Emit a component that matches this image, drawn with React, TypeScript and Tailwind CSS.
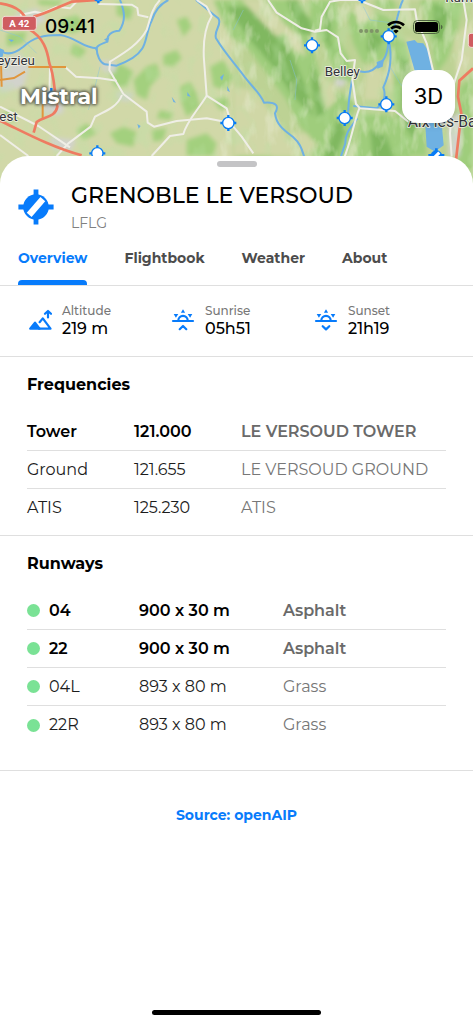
import React from 'react';
import clsx from 'clsx';

interface Frequency {
  name: string;
  value: string;
  callsign: string;
  primary?: boolean;
}

interface Runway {
  name: string;
  size: string;
  surface: string;
  primary?: boolean;
}

interface StatProps {
  label: string;
  value: string;
  icon: React.ReactNode;
}

const tabs = ['Overview', 'Flightbook', 'Weather', 'About'];

const frequencies: Frequency[] = [
  { name: 'Tower', value: '121.000', callsign: 'LE VERSOUD TOWER', primary: true },
  { name: 'Ground', value: '121.655', callsign: 'LE VERSOUD GROUND' },
  { name: 'ATIS', value: '125.230', callsign: 'ATIS' },
];

const runways: Runway[] = [
  { name: '04', size: '900 x 30 m', surface: 'Asphalt', primary: true },
  { name: '22', size: '900 x 30 m', surface: 'Asphalt', primary: true },
  { name: '04L', size: '893 x 80 m', surface: 'Grass' },
  { name: '22R', size: '893 x 80 m', surface: 'Grass' },
];

// Airfields shown on the map, in map units
const airfields = [
  [936, 136], [1166, 109], [1159, 313], [1034, 354], [685, 369], [292, 460], [295, -14], [1086, -14],
];

const forests = [
  'M330 225 L360 190 L400 215 L380 260 L345 260 Z',
  'M400 240 L440 200 L470 190 L480 225 L450 260 L440 300 L410 285 Z',
  'M490 165 L530 150 L545 175 L520 200 L490 195 Z',
  'M540 260 L570 245 L590 280 L600 320 L560 350 L545 310 Z',
  'M330 400 L370 380 L410 395 L400 440 L350 430 Z',
  'M560 420 L620 400 L650 430 L640 468 L560 468 Z',
  'M110 0 L190 0 L170 18 L120 15 Z',
  'M180 60 L230 45 L260 80 L220 100 L180 90 Z',
  'M20 100 L80 95 L70 130 L20 140 Z',
  'M350 5 L400 25 L390 60 L350 45 Z',
  'M530 60 L560 50 L575 80 L550 110 Z',
  'M230 390 L260 370 L290 400 L250 420 Z',
  'M10 340 L40 330 L50 360 L20 365 Z',
  'M480 330 L520 340 L510 360 L470 355 Z',
  'M630 200 L670 180 L700 230 L680 270 L640 260 Z',
  'M220 130 L260 150 L240 175 L210 160 Z',
  'M455 390 L500 385 L490 420 L460 425 Z',
  'M640 300 L680 290 L690 320 L660 330 Z',
];

const hills = [
  'M640 0 L860 0 L900 60 L930 120 L960 220 L990 330 L1000 400 L960 440 L900 380 L860 300 L800 220 L740 140 L690 110 Z',
  'M930 0 L1010 0 L1020 60 L1010 110 L1050 180 L1060 250 L1010 240 L990 180 L960 110 L930 80 Z',
  'M1040 40 L1120 30 L1180 60 L1190 130 L1150 180 L1090 190 L1060 130 Z',
  'M1180 110 L1230 130 L1260 230 L1270 350 L1280 468 L1180 468 L1190 330 L1170 240 Z',
  'M1260 0 L1390 0 L1370 100 L1340 180 L1310 220 L1290 110 Z',
  'M1080 340 L1170 345 L1220 400 L1240 564 L1060 564 L1070 430 Z',
  'M1000 270 L1060 300 L1060 420 L1010 564 L900 564 L960 420 Z',
  'M720 400 L800 440 L860 564 L700 564 Z',
  'M1380 260 L1419 230 L1419 564 L1370 564 Z',
  'M1120 0 L1180 0 L1190 30 L1140 25 Z',
];

const ridges = [
  'M680 20 L760 20 L830 90 L880 170 L920 270 L940 350 L880 290 L820 200 L750 120 Z',
  'M860 0 L890 0 L930 60 L940 105 L900 100 Z',
  'M975 20 L995 60 L990 120 L1010 170 L975 120 Z',
  'M1110 90 L1150 110 L1130 160 L1100 150 Z',
  'M1200 160 L1225 190 L1240 280 L1245 420 L1215 380 L1210 260 Z',
  'M1300 10 L1350 30 L1330 120 L1305 120 Z',
  'M1110 390 L1160 410 L1190 500 L1120 490 Z',
  'M1020 340 L1035 400 L985 520 L970 480 Z',
  'M935 190 L960 250 L975 340 L950 350 L935 260 Z',
];

const fields = [
  'M725 0 L795 0 L830 40 L870 100 L830 110 L780 60 Z',
  'M960 230 L1000 250 L1010 300 L980 330 L965 290 Z',
  'M1060 10 L1110 10 L1130 50 L1075 70 Z',
  'M1100 200 L1150 210 L1140 300 L1090 300 Z',
  'M1215 110 L1240 120 L1290 260 L1280 320 L1240 220 Z',
  'M840 60 L900 110 L920 170 L880 150 Z',
  'M1360 110 L1419 60 L1419 200 L1370 250 Z',
  'M870 400 L920 400 L950 440 L910 468 Z',
  'M1160 180 L1180 200 L1180 280 L1162 270 Z',
  'M700 260 L760 270 L830 360 L900 468 L700 468 Z',
];

const rivers = [
  'M0 150 C20 168 45 160 70 140 C100 112 130 105 180 105 C230 112 245 142 290 145 C290 165 300 188 315 193 L350 197 C390 182 415 165 425 148 C440 130 440 90 455 62 C465 30 480 12 505 0',
  'M360 0 C372 30 380 60 358 92 C335 92 318 108 322 125 C295 135 285 142 290 150',
  'M588 0 C610 18 640 45 655 55 C668 75 640 90 648 115 C675 160 700 185 735 232 C765 270 780 280 792 308 C830 305 838 318 825 340 C830 380 860 395 880 412 C905 435 905 450 916 480',
  'M1209 0 C1190 35 1200 60 1166 110 C1165 160 1155 180 1139 190 C1120 215 1100 220 1079 214',
  'M1166 120 C1180 180 1165 230 1150 262 C1160 290 1150 310 1130 325 L1060 318',
  'M1056 240 C1050 280 1045 300 1044 345',
  'M1072 355 C1050 385 1035 400 1036 430 C1030 450 1025 460 1020 480',
];

const roads = [
  'M60 45 L105 35 L125 40 L170 20 L210 25 L235 0',
  'M295 12 L395 14 L412 24 L415 45 L445 52',
  'M480 0 C455 25 450 60 440 90 C415 135 370 160 330 185 L328 210 L370 282 L440 335 L443 368 L462 380 L530 363 L620 355 L690 368 L725 410 L760 460',
  'M198 203 L228 230 L300 235 L350 242',
  'M366 285 C350 325 310 335 285 350 L272 380 L205 430 L170 468',
  'M590 0 L620 20 L635 48 C610 90 610 150 612 180 L620 287 L680 325 L690 360',
  'M620 287 C590 335 560 365 550 402 L510 408 L455 468',
  'M0 320 L115 378 L210 442',
  'M0 405 L85 468',
  'M150 200 L148 300',
  'M804 0 L830 38 L905 85 L945 95 L980 90 L1014 112 L1022 160 L1040 183 L1065 180 L1057 240 L1068 312 L1080 325 L1185 333 L1225 365',
  'M945 92 L960 88 L965 50 L990 5 L1020 0 L1075 0 L1150 30 L1245 28 L1250 60 L1280 130 L1300 215',
  'M1390 0 L1400 60 L1385 180 L1362 250 L1350 400 L1355 470',
  'M1078 325 C1060 370 1055 420 1030 480',
];

const AirfieldMap: React.FC = () => (
  <svg
    viewBox="0 0 1419 564"
    preserveAspectRatio="xMidYMin slice"
    className="absolute inset-0 h-full w-full"
    aria-hidden="true"
  >
    <defs>
      <filter id="relief" x="-5%" y="-5%" width="110%" height="110%">
        <feGaussianBlur stdDeviation="7" />
      </filter>
      <filter id="woods" x="0" y="0" width="100%" height="100%">
        <feTurbulence type="fractalNoise" baseFrequency="0.022 0.016" numOctaves="2" seed="8" />
        <feColorMatrix values="0 0 0 0 0.5  0 0 0 0 0.76  0 0 0 0 0.38  4 0 0 0 -2" />
      </filter>
      <filter id="clearings" x="0" y="0" width="100%" height="100%">
        <feTurbulence type="fractalNoise" baseFrequency="0.03 0.012" numOctaves="3" seed="21" />
        <feColorMatrix values="0 0 0 0 0.82  0 0 0 0 0.85  0 0 0 0 0.66  4 0 0 0 -2" />
      </filter>
    </defs>
    <rect width="1419" height="564" fill="#d1d8a8" />
    <rect x="700" width="719" height="564" fill="#bdd294" filter="url(#relief)" />

    {/* Terrain */}
    <g filter="url(#relief)">
      {hills.map((d) => <path key={d} d={d} fill="#9fcd7c" />)}
      {ridges.map((d) => <path key={d} d={d} fill="#80b861" />)}
      {forests.map((d) => <path key={d} d={d} fill="#a3d07e" />)}
      {fields.map((d) => <path key={d} d={d} fill="#d0d7a6" />)}
      <path d="M45 40 L110 25 L140 60 L100 80 L60 70 Z M0 180 L60 160 L90 190 L70 260 L0 280 Z M120 270 L190 270 L190 340 L130 350 Z M300 180 L350 185 L345 220 L310 215 Z M350 275 L400 280 L390 305 L355 300 Z M150 410 L230 420 L210 455 L160 450 Z M1005 235 L1040 240 L1030 262 L1005 258 Z M1345 350 L1385 340 L1380 468 L1345 468 Z" fill="#d2d3cc" />
    </g>
    <rect width="1419" height="564" filter="url(#woods)" opacity="0.3" />
    <rect x="660" width="759" height="564" filter="url(#clearings)" opacity="0.4" />

    {/* Water */}
    <g fill="none" stroke="#6fb1e2" strokeWidth="6" strokeLinejoin="round">
      {rivers.map((d) => <path key={d} d={d} />)}
    </g>
    <g fill="none" stroke="#86c2dc" strokeWidth="2" opacity="0.7">
      <path d="M300 200 L280 280 L265 330 M0 90 L60 110 L110 160 M1185 70 L1110 60 L1090 20 M1170 200 L1200 250 L1240 300 M730 30 L700 90 M870 180 L890 240 L885 300" />
    </g>
    <g fill="#6fb1e2">
      <path d="M1219 125 L1244 120 L1252 128 L1270 130 L1283 150 L1300 212 L1325 370 L1331 436 L1305 455 L1280 440 L1275 360 L1245 215 Z" />
      <path d="M1130 186 L1152 178 L1148 200 L1132 206 Z M515 290 L528 308 L520 306 Z M562 276 L572 290 L562 288 Z M660 232 L672 222 L666 242 Z M682 258 L690 276 L682 272 Z M412 372 L422 378 L416 386 Z M25 118 L42 120 L34 126 Z M0 145 L12 150 L8 170 L0 172 Z M312 118 L328 112 L324 128 Z" />
    </g>

    {/* Roads */}
    <g fill="none" stroke="#efeee6" strokeWidth="6" strokeLinejoin="round">
      {roads.map((d) => <path key={d} d={d} />)}
    </g>
    <g fill="none" stroke="#e0963c" strokeWidth="6">
      <path d="M85 201 L198 201 M0 240 L42 234 L75 215 M3 190 L5 260 M128 310 L128 355" />
    </g>
    <g fill="none" stroke="#ee7b61" strokeWidth="8">
      <path d="M0 10 C55 18 78 40 88 88 C130 112 142 150 148 190 C165 230 162 280 172 320 C165 355 130 348 110 366 L101 398" />
      <path d="M0 362 C70 395 150 440 245 466" />
      <path d="M100 50 C140 40 180 18 215 5 L295 0" />
      <path d="M1419 205 L1378 242 L1374 290 L1384 340 L1368 480" />
    </g>

    {/* Road shields */}
    <rect x="7" y="49" width="102" height="42" rx="8" fill="#cf5c60" stroke="#f3ddd6" strokeWidth="3" />
    <text x="58" y="81" textAnchor="middle" className="fill-white font-['Roboto',sans-serif] text-[29px] font-bold">A 42</text>
    <rect x="1405" y="100" width="60" height="42" rx="8" fill="#cf5c60" stroke="#f3ddd6" strokeWidth="3" />

    {/* Airfields */}
    <g stroke="#077bf5">
      {airfields.map(([x, y]) => (
        <g key={`${x}-${y}`}>
          <path d={`M${x - 24} ${y}h48M${x} ${y - 24}v48`} strokeWidth="7" />
          <circle cx={x} cy={y} r="17" fill="#fff" strokeWidth="4" />
        </g>
      ))}
      <path d="M128 290h48M154 264v48" strokeWidth="7" />
      <circle cx="154" cy="290" r="17" fill="#0a5cb8" />
      <path d="M1285 466h48M1309 445v48" strokeWidth="8" />
      <circle cx="1309" cy="468" r="17" fill="#077bf5" />
      <path d="M1300 476l18 -18" stroke="#fff" strokeWidth="9" />
    </g>

    {/* Place names */}
    <g
      className="fill-[#30333a] font-['Roboto',sans-serif] text-[40px]"
      stroke="#f1f1e4"
      strokeWidth="5"
      strokeLinejoin="round"
      paintOrder="stroke"
    >
      <text x="-8" y="195">eyzieu</text>
      <text x="-2" y="362">est</text>
      <text x="974" y="228">Belley</text>
      <text x="1223" y="381" className="text-[47px]">Aix-les-Bains</text>
      <text x="1336" y="6">Rumilly</text>
    </g>
  </svg>
);

const StatusBar: React.FC = () => (
  <div className="relative flex h-[54px] items-center justify-between pr-[30px] pl-[45px] text-black">
    <span className="font-['Inter',sans-serif] text-[19px] font-medium">09:41</span>
    <div className="flex items-center gap-2">
      <svg width="20" height="4" viewBox="0 0 20 4" className="mt-2 fill-[#7f9468]" aria-hidden="true">
        <circle cx="2" cy="2" r="2" />
        <circle cx="7.3" cy="2" r="2" />
        <circle cx="12.6" cy="2" r="2" />
        <circle cx="18" cy="2" r="2" />
      </svg>
      <svg width="18" height="14" viewBox="0 0 18 14" fill="none" stroke="#000" strokeWidth="2.6" aria-hidden="true">
        <path d="M1 5.2a11.5 11.5 0 0 1 16 0" />
        <path d="M4.1 8.6a7 7 0 0 1 9.8 0" />
        <path d="M9 13.6L6.3 11a3.9 3.9 0 0 1 5.4 0z" fill="#000" stroke="none" />
      </svg>
      <svg width="30" height="14" viewBox="0 0 30 14" aria-hidden="true">
        <rect x="0.5" y="0.5" width="26" height="13" rx="4" fill="none" stroke="#4e6440" />
        <rect x="2" y="2" width="23" height="10" rx="2.6" />
        <path d="M27.9 4.7v4.6c1.1-.4 1.6-1.3 1.6-2.3s-.5-1.9-1.6-2.3z" fill="#4e6440" />
      </svg>
    </div>
  </div>
);

const AirfieldIcon: React.FC = () => (
  <svg width="36" height="36" viewBox="0 0 36 36" className="shrink-0 fill-[#077bfb]" aria-hidden="true">
    <path d="M15.6 0.4h4.8v35.2h-4.8z" />
    <path d="M0.4 15.6h35.2v4.8H0.4z" />
    <circle cx="18" cy="18" r="12.8" />
    <rect x="14.8" y="7.6" width="6.4" height="20.8" fill="#fff" transform="rotate(41 18 18)" />
  </svg>
);

const AltitudeIcon: React.FC = () => (
  <svg width="24" height="24" viewBox="0 0 24 24" fill="none" stroke="#077bfb" strokeWidth="2.2" strokeLinecap="round" strokeLinejoin="round" aria-hidden="true">
    <path d="M2.2 20.7L7 14.6l4.6 6.1z" fill="#077bfb" />
    <path d="M11 20.700H22.500L14.800 10.400l-3.200 3.800" />
    <path d="M20 9.500V3.200M17 5.800L20 3l3 2.800" />
  </svg>
);

const SunIcon: React.FC<{ rising?: boolean }> = ({ rising = false }) => (
  <svg width="24" height="24" viewBox="0 0 24 24" fill="none" stroke="#077bfb" strokeWidth="2.2" strokeLinecap="round" strokeLinejoin="round" aria-hidden="true">
    <path d="M2 13h20" />
    <path d="M7.3 12.6a4.7 4.7 0 0 1 9.4 0" />
    <path d="M12 1.2l2.1 3.5H9.9zM2.7 6h4.6L4.900 9.700zM21.300 6h-4.600l2.400 3.700z" fill="#077bfb" stroke="none" />
    {rising ? <path d="M8.700 21.200L12 18l3.300 3.200" /> : <path d="M8.700 18.200l3.300 3.200 3.300-3.200" />}
  </svg>
);

const Stat: React.FC<StatProps> = ({ label, value, icon }) => (
  <div className="flex items-center gap-2.5">
    {icon}
    <dl>
      <dt className="text-xs leading-[18px] font-medium text-[#777777]">{label}</dt>
      <dd className="text-base leading-[18px] font-medium text-black">{value}</dd>
    </dl>
  </div>
);

const Section: React.FC<{ title: string; className: string; children: React.ReactNode }> = ({
  title,
  className,
  children,
}) => (
  <section className={clsx('border-b border-[#dfdfdf] px-[27px] pt-4', className)}>
    <h2 className="text-base leading-6 font-bold text-black">{title}</h2>
    <table className="mt-4 w-full table-fixed border-separate border-spacing-0 text-left whitespace-nowrap">
      {children}
    </table>
  </section>
);

const App: React.FC = () => {
  return (
    <div className="flex min-h-screen flex-col bg-white font-['Montserrat','Inter',sans-serif]">
      <header className="relative h-[188px] overflow-hidden">
        <AirfieldMap />
        <StatusBar />
        <div className="relative mt-4 flex items-center justify-between pr-[18px] pl-5">
          <span className="text-[22px] font-bold text-white [text-shadow:0_0_2px_#6b6d5c,0_0_3px_#6b6d5c,0_0_3px_#6b6d5c,0_0_4px_#6b6d5c,0_0_4px_#6b6d5c]">
            Mistral
          </span>
          <button type="button" className="size-[53px] rounded-2xl bg-white font-['Inter',sans-serif] text-[22px] text-black shadow-md">
            3D
          </button>
        </div>
      </header>

      <main className="relative -mt-8 flex flex-1 flex-col rounded-t-[28px] bg-white pt-[5px]">
        <div className="mx-auto h-1.5 w-10 rounded-full bg-[#c4c4c6]"></div>

        {/* Title */}
        <div className="flex items-center gap-[17px] px-[18px] pt-[13px]">
          <AirfieldIcon />
          <div>
            <h1 className="text-[22px] leading-8 font-medium text-black">GRENOBLE LE VERSOUD</h1>
            <p className="text-sm leading-[22px] text-[#808080]">LFLG</p>
          </div>
        </div>

        {/* Tabs */}
        <nav className="flex gap-[37px] border-b border-[#dfdfdf] px-[18px]">
          {tabs.map((tab, index) => (
            <button
              key={tab}
              type="button"
              className={clsx('flex flex-col pt-3 text-sm leading-6 font-bold', index === 0 ? 'text-[#077bfb]' : 'text-[#4c4c4c]')}
            >
              {tab}
              <span className={clsx('mt-2.5 h-[5px] w-full rounded-t-[4px]', index === 0 && 'bg-[#077bfb]')}></span>
            </button>
          ))}
        </nav>

        {/* Quick facts */}
        <div className="grid h-[71px] grid-cols-3 border-b border-[#dfdfdf] pr-4 pb-0.5 pl-7">
          <Stat label="Altitude" value="219 m" icon={<AltitudeIcon />} />
          <Stat label="Sunrise" value="05h51" icon={<SunIcon rising />} />
          <Stat label="Sunset" value="21h19" icon={<SunIcon />} />
        </div>

        <Section title="Frequencies" className="pb-2">
          <colgroup>
            <col className="w-[107px]" />
            <col className="w-[107px]" />
            <col />
          </colgroup>
          <tbody className="[&>tr:not(:last-child)>*]:border-b [&>tr>*]:border-[#dfdfdf]">
            {frequencies.map((frequency) => (
              <tr key={frequency.name} className={clsx('h-[38px] text-base', frequency.primary ? 'font-semibold text-black' : 'text-[#1c1c1c]')}>
                <th scope="row" className={clsx('p-0', frequency.primary ? 'font-semibold' : 'font-normal')}>{frequency.name}</th>
                <td className="p-0">{frequency.value}</td>
                <td className={clsx('p-0', frequency.primary ? 'text-[#6a6a6a]' : 'text-[#777777]')}>{frequency.callsign}</td>
              </tr>
            ))}
          </tbody>
        </Section>

        <Section title="Runways" className="pb-[26px]">
          <colgroup>
            <col className="w-[112px]" />
            <col className="w-[144px]" />
            <col />
          </colgroup>
          <tbody className="[&>tr:not(:last-child)>*]:border-b [&>tr>*]:border-[#dfdfdf]">
            {runways.map((runway) => (
              <tr key={runway.name} className={clsx('h-[38px] text-base', runway.primary ? 'font-semibold text-black' : 'text-[#1c1c1c]')}>
                <th scope="row" className={clsx('p-0', runway.primary ? 'font-semibold' : 'font-normal')}>
                  <span className="flex items-center gap-[9px]">
                    <span className="size-[13px] rounded-full bg-[#7ae295]"></span>
                    {runway.name}
                  </span>
                </th>
                <td className="p-0">{runway.size}</td>
                <td className={clsx('p-0', runway.primary ? 'text-[#6a6a6a]' : 'text-[#777777]')}>{runway.surface}</td>
              </tr>
            ))}
          </tbody>
        </Section>

        <a href="#openaip" className="mx-auto mt-8 text-sm leading-6 font-bold text-[#077bfb]">
          Source: openAIP
        </a>

        {/* Home indicator */}
        <div className="mx-auto mt-auto mb-[9px] h-[5px] w-[169px] rounded-full bg-black"></div>
      </main>
    </div>
  );
};

export default App;
